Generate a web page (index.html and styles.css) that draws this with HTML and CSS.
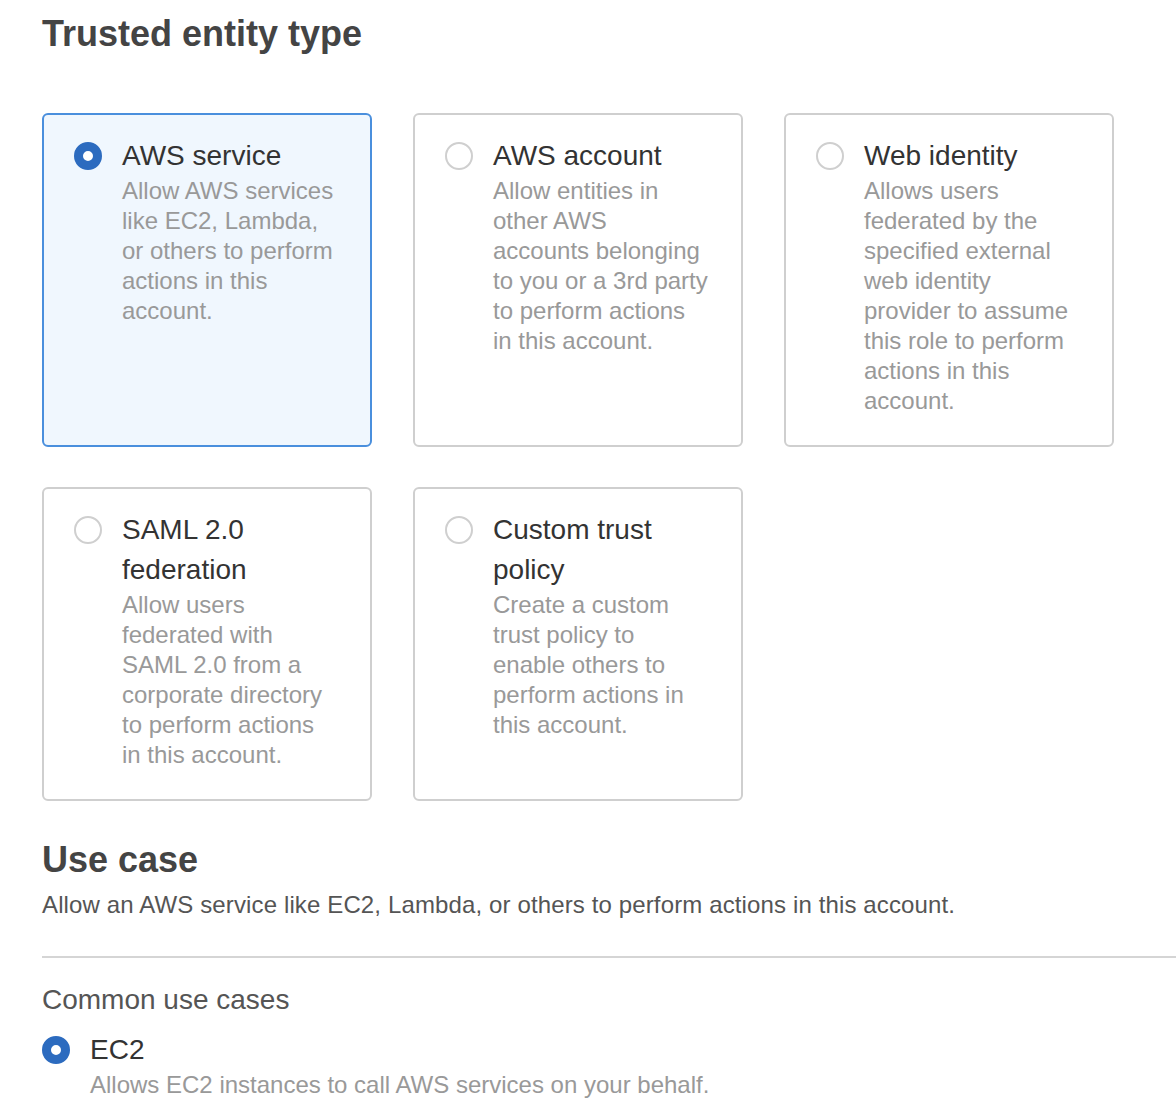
FILE: index.html
```html
<!DOCTYPE html>
<html lang="en">
<head>
<meta charset="utf-8">
<title>Trusted entity type</title>
<link rel="stylesheet" href="styles.css">
</head>
<body>
<main class="page">
  <h1 class="heading">Trusted entity type</h1>
  <div class="cards">
    <div class="card card--selected">
      <span class="radio radio--on"></span>
      <div class="card-body">
        <div class="card-title">AWS service</div>
        <div class="card-desc">Allow AWS services like EC2, Lambda, or others to perform actions in this account.</div>
      </div>
    </div>
    <div class="card">
      <span class="radio"></span>
      <div class="card-body">
        <div class="card-title">AWS account</div>
        <div class="card-desc">Allow entities in other AWS accounts belonging to you or a 3rd party to perform actions in this account.</div>
      </div>
    </div>
    <div class="card">
      <span class="radio"></span>
      <div class="card-body">
        <div class="card-title">Web identity</div>
        <div class="card-desc">Allows users federated by the specified external web identity provider to assume this role to perform actions in this account.</div>
      </div>
    </div>
    <div class="card">
      <span class="radio"></span>
      <div class="card-body">
        <div class="card-title">SAML 2.0 federation</div>
        <div class="card-desc">Allow users federated with SAML 2.0 from a corporate directory to perform actions in this account.</div>
      </div>
    </div>
    <div class="card">
      <span class="radio"></span>
      <div class="card-body">
        <div class="card-title">Custom trust policy</div>
        <div class="card-desc">Create a custom trust policy to enable others to perform actions in this account.</div>
      </div>
    </div>
  </div>

  <h2 class="heading heading--usecase">Use case</h2>
  <p class="lead">Allow an AWS service like EC2, Lambda, or others to perform actions in this account.</p>
  <div class="divider"></div>
  <div class="subhead">Common use cases</div>
  <div class="option">
    <span class="radio radio--on"></span>
    <div class="option-body">
      <div class="option-title">EC2</div>
      <div class="option-desc">Allows EC2 instances to call AWS services on your behalf.</div>
    </div>
  </div>
</main>
</body>
</html>
```
FILE: styles.css
```css
* { box-sizing: border-box; }
html, body { margin: 0; padding: 0; background: #fff; }
body {
  font-family: "Liberation Sans", Arial, Helvetica, sans-serif;
  color: #333;
}
.page {
  padding: 12px 0 0 42px;
}
.heading {
  margin: 0;
  font-size: 36px;
  line-height: 44px;
  font-weight: 700;
  color: #444;
}
.cards {
  display: grid;
  grid-template-columns: repeat(3, 330px);
  column-gap: 41px;
  row-gap: 40px;
  margin-top: 57px;
}
.card {
  display: flex;
  align-items: flex-start;
  gap: 20px;
  border: 2px solid #cfcfcf;
  border-radius: 6px;
  background: #fff;
  padding: 21px 32px 29px 30px;
}
.card--selected {
  border-color: #4a8fdd;
  background: #f0f7fe;
}
.radio {
  flex: none;
  width: 28px;
  height: 28px;
  border-radius: 50%;
  border: 2px solid #cfcfcf;
  background: #fff;
  margin-top: 6px;
}
.radio--on {
  border: 9px solid #2c6bbf;
}
.card-body { flex: 1; min-width: 0; }
.card-title {
  font-size: 28px;
  line-height: 40px;
  color: #333;
}
.card-desc {
  font-size: 24px;
  line-height: 30px;
  color: #999;
}
.heading--usecase {
  margin-top: 37px;
}
.lead {
  margin: 8px 0 0;
  font-size: 24px;
  line-height: 30px;
  letter-spacing: 0.13px;
  color: #555;
}
.divider {
  margin-top: 36px;
  height: 2px;
  background: #d5d5d5;
}
.subhead {
  margin-top: 22px;
  font-size: 28px;
  line-height: 40px;
  color: #555;
}
.option {
  display: flex;
  align-items: flex-start;
  gap: 20px;
  margin-top: 10px;
}
.option .radio { margin-top: 6px; }
.option-title {
  font-size: 28px;
  line-height: 40px;
  color: #333;
}
.option-desc {
  font-size: 24px;
  line-height: 30px;
  color: #999;
}
```
